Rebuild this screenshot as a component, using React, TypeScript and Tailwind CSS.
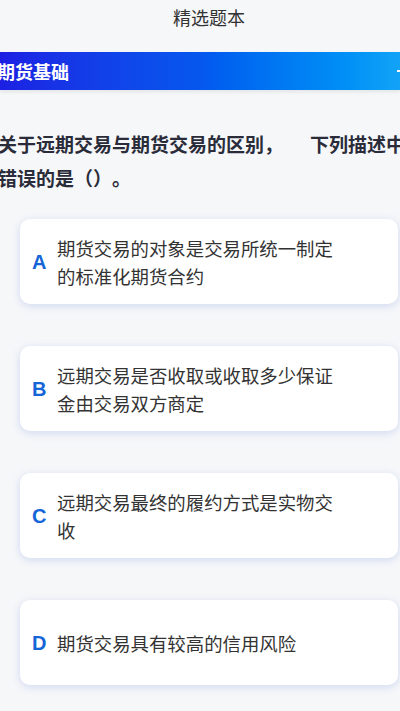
import React from "react";

const options = [
  { key: "A", text: "期货交易的对象是交易所统一制定的标准化期货合约" },
  { key: "B", text: "远期交易是否收取或收取多少保证金由交易双方商定" },
  { key: "C", text: "远期交易最终的履约方式是实物交收" },
  { key: "D", text: "期货交易具有较高的信用风险" },
];

const cjk = { fontFamily: '"Noto Sans CJK SC", "Noto Sans", sans-serif' };

export default function App() {
  return (
    <div
      className="w-[400px] h-[711px] overflow-hidden bg-[#f6f7f9] flex flex-col [text-spacing-trim:space-all]"
      style={cjk}
    >
      <div className="h-[34px] pl-[18px] flex items-center justify-center text-[18px] text-[#333333] leading-[34px]">
        精选题本
      </div>
      <div className="mt-[18px] h-[38px] relative flex items-center bg-gradient-to-r from-[#1c1fe3] via-[#0657ee] to-[#12a3f8] shadow-[0_2px_4px_rgba(0,0,0,0.08)]">
        <span className="ml-[-3px] text-[18px] font-bold text-white leading-none">期货基础</span>
        <span className="absolute right-0 top-[18px] w-[3px] h-[2px] bg-white" />
      </div>
      <div className="mt-[37px] ml-[-2px] text-[19px] font-bold text-[#2a2c3a] leading-[34px] whitespace-nowrap">
        <div>
          关于远期交易与期货交易的区别<span className="mr-[27px]">，</span>下列描述中
        </div>
        <div>错误的是（）。</div>
      </div>
      <div className="mt-[24px] ml-[20px] w-[378px] flex flex-col gap-[42px]">
        {options.map((o) => (
          <div
            key={o.key}
            className="h-[85px] bg-white rounded-[10px] shadow-[0_2px_8px_rgba(70,110,210,0.22)] flex items-center pl-[12px]"
          >
            <span
              className="w-[16px] text-[20px] font-bold text-[#1565d8] leading-none"
              style={{ fontFamily: '"Liberation Sans", Arial, sans-serif' }}
            >
              {o.key}
            </span>
            <span className="ml-[9px] w-[285px] text-[18.4px] text-[#333333] leading-[28px]">
              {o.text}
            </span>
          </div>
        ))}
      </div>
    </div>
  );
}
